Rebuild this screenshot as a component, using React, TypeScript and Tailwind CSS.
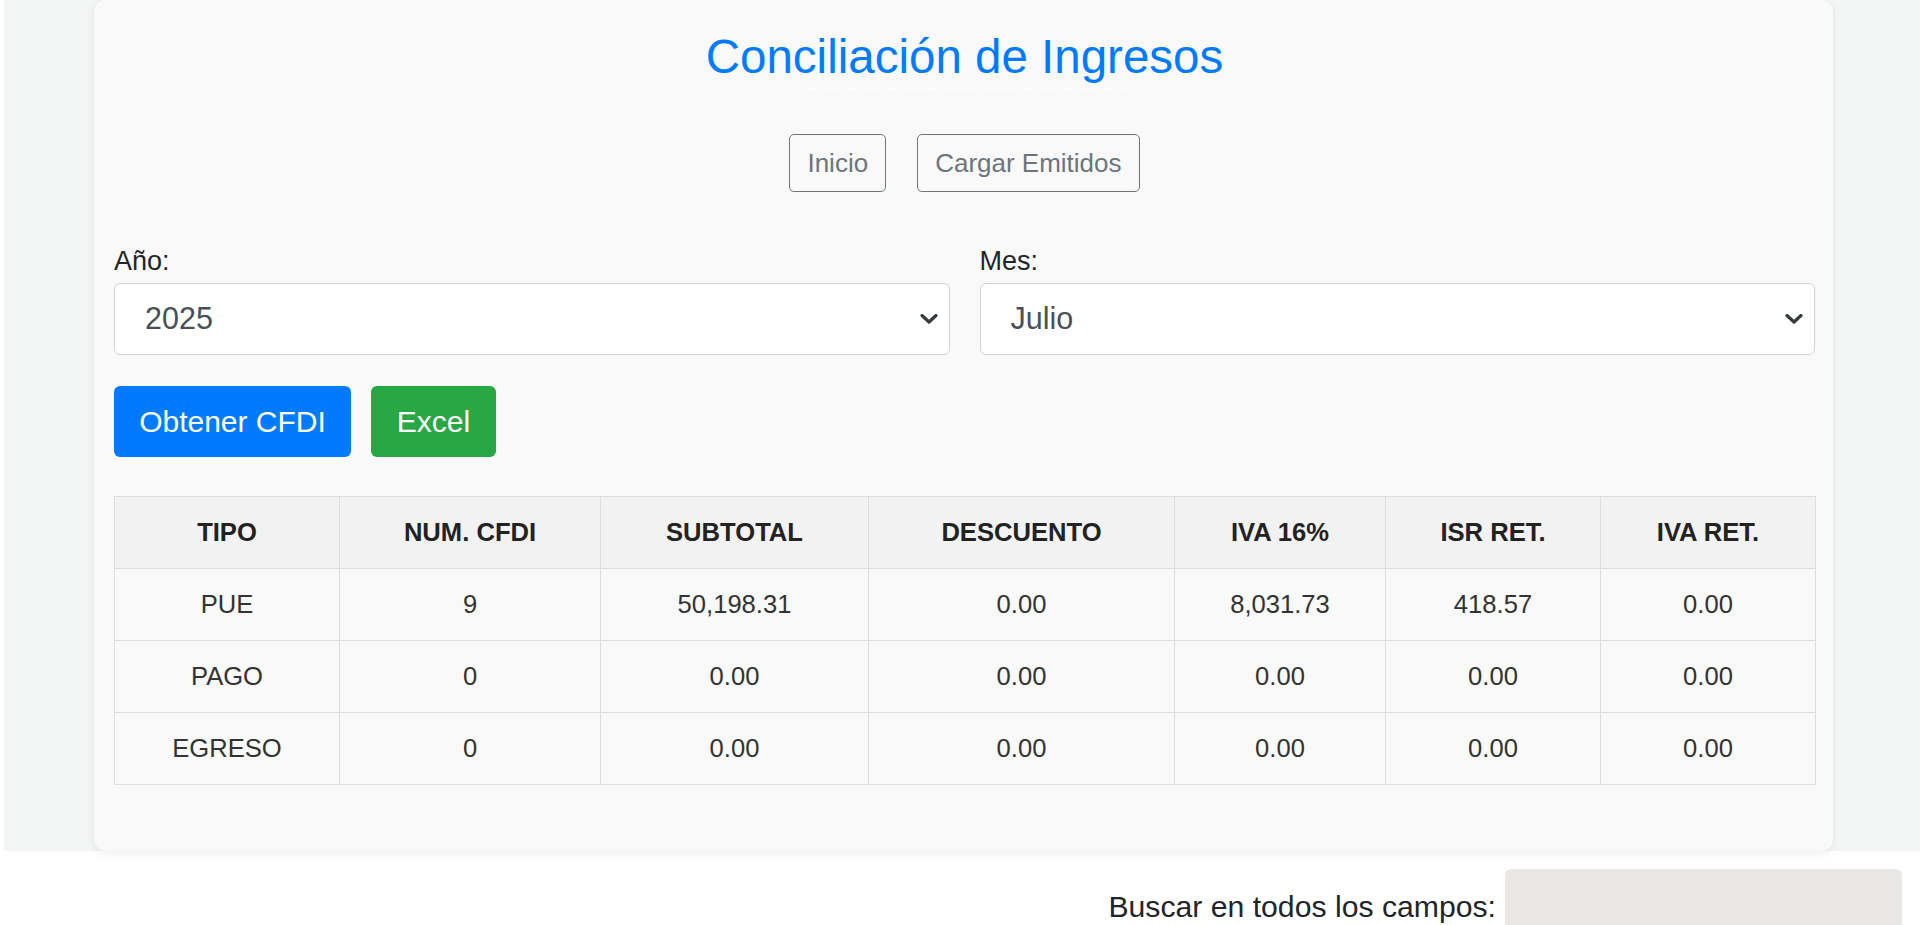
import React from "react";

const rows = [
  { tipo: "PUE", num: "9", subtotal: "50,198.31", descuento: "0.00", iva: "8,031.73", isr: "418.57", ivaRet: "0.00" },
  { tipo: "PAGO", num: "0", subtotal: "0.00", descuento: "0.00", iva: "0.00", isr: "0.00", ivaRet: "0.00" },
  { tipo: "EGRESO", num: "0", subtotal: "0.00", descuento: "0.00", iva: "0.00", isr: "0.00", ivaRet: "0.00" },
];

const columns = [
  { label: "TIPO", w: "w-[225px]" },
  { label: "NUM. CFDI", w: "w-[261px]" },
  { label: "SUBTOTAL", w: "w-[268px]" },
  { label: "DESCUENTO", w: "w-[306px]" },
  { label: "IVA 16%", w: "w-[211px]" },
  { label: "ISR RET.", w: "w-[215px]" },
  { label: "IVA RET.", w: "w-[215px]" },
];

const Chevron = () => (
  <svg
    className="pointer-events-none absolute right-[12px] top-[31px] h-[10px] w-[18px]"
    viewBox="0 0 18 10"
    fill="none"
  >
    <polyline points="2,1.5 9,8 16,1.5" stroke="#343a40" strokeWidth="3.2" strokeLinecap="round" strokeLinejoin="round" />
  </svg>
);

const SelectField: React.FC<{ label: string; value: string; options: string[] }> = ({ label, value, options }) => (
  <div className="flex flex-col">
    <label className="text-[27px] leading-[32px] text-[#212529] mb-[6px]">{label}</label>
    <div className="relative">
      <select
        defaultValue={value}
        className="appearance-none w-full h-[72px] rounded-[6px] border-[1.5px] border-[#ced4da] bg-white pl-[30px] pr-[40px] text-[30.5px] text-[#495057] outline-none"
      >
        {options.map((o) => (
          <option key={o} value={o}>
            {o}
          </option>
        ))}
      </select>
      <Chevron />
    </div>
  </div>
);

export default function App() {
  const meses = ["Enero", "Febrero", "Marzo", "Abril", "Mayo", "Junio", "Julio", "Agosto", "Septiembre", "Octubre", "Noviembre", "Diciembre"];

  return (
    <div className="min-h-screen bg-white font-['Liberation_Sans',Arial,sans-serif]">
      <div className="ml-[4px] bg-[#f4f5f5] pl-[90px]">
        <div className="w-[1739px] h-[851px] bg-[#f9f9f9] rounded-[12px] shadow-[0_2px_10px_rgba(0,0,0,0.08)] pl-[20px] pr-[18px]">
          <h2 className="pt-[33px] text-center text-[47.5px] leading-[47px] text-[#007bff]">Conciliación de Ingresos</h2>
          <div className="mx-auto mt-[8px] w-[324px] border-t-[1.5px] border-dashed border-white" />

          <div className="mt-[45px] flex justify-center gap-[31px]">
            <button className="h-[58px] px-[17px] rounded-[5px] border-[1.5px] border-[#6c757d] text-[26px] text-[#6c757d]">
              Inicio
            </button>
            <button className="h-[58px] px-[17px] rounded-[5px] border-[1.5px] border-[#6c757d] text-[26px] text-[#6c757d]">
              Cargar Emitidos
            </button>
          </div>

          <div className="mt-[53px] grid grid-cols-2 gap-x-[30px]">
            <SelectField label="Año:" value="2025" options={["2023", "2024", "2025"]} />
            <SelectField label="Mes:" value="Julio" options={meses} />
          </div>

          <div className="mt-[31px] flex gap-[20px]">
            <button className="h-[71px] w-[237px] rounded-[6px] bg-[#007bff] text-[30px] text-white">Obtener CFDI</button>
            <button className="h-[71px] w-[125px] rounded-[6px] bg-[#28a745] text-[30px] text-white">Excel</button>
          </div>

          <table className="mt-[39px] w-full table-fixed border-collapse text-center text-[25.6px]">
            <thead>
              <tr className="h-[72px] bg-[#f2f2f2]">
                {columns.map((c) => (
                  <th key={c.label} className={`${c.w} border-[1.5px] border-[#dddddd] font-bold text-[#222222]`}>
                    {c.label}
                  </th>
                ))}
              </tr>
            </thead>
            <tbody>
              {rows.map((r) => (
                <tr key={r.tipo} className="h-[72px] bg-[#f9f9f9] text-[#333333]">
                  <td className="border-[1.5px] border-[#dddddd]">{r.tipo}</td>
                  <td className="border-[1.5px] border-[#dddddd]">{r.num}</td>
                  <td className="border-[1.5px] border-[#dddddd]">{r.subtotal}</td>
                  <td className="border-[1.5px] border-[#dddddd]">{r.descuento}</td>
                  <td className="border-[1.5px] border-[#dddddd]">{r.iva}</td>
                  <td className="border-[1.5px] border-[#dddddd]">{r.isr}</td>
                  <td className="border-[1.5px] border-[#dddddd]">{r.ivaRet}</td>
                </tr>
              ))}
            </tbody>
          </table>
        </div>
      </div>

      <div className="flex justify-end items-start pr-[18px] pt-[18px]">
        <label className="mt-[20px] mr-[9px] text-[30.2px] leading-[36px] text-[#212529]">Buscar en todos los campos:</label>
        <input className="h-[62px] w-[397px] rounded-[6px] bg-[#e8e7e5] outline-none" />
      </div>
    </div>
  );
}
